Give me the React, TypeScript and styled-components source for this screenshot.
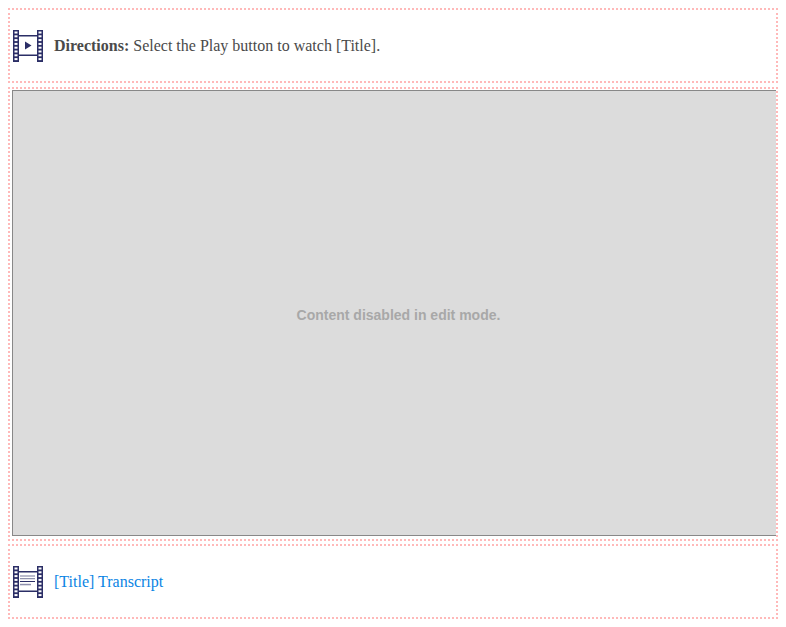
import React, { FC } from 'react';
import styled, { createGlobalStyle } from 'styled-components';

const GlobalStyle = createGlobalStyle`
    body {
        margin: 8px;
        background: #fff;
    }
`;

const HOLES = [0, 1, 2, 3, 4, 5, 6, 7];

const FilmStrips: FC = () => (
    <>
        <rect x="0" y="0" width="6" height="32" fill="#2b2e66" />
        <rect x="24" y="0" width="6" height="32" fill="#2b2e66" />
        {HOLES.map(i => (
            <g key={i} fill="#fff">
                <rect x="1.5" y={1.5 + i * 3.8} width="3" height="2" />
                <rect x="25.5" y={1.5 + i * 3.8} width="3" height="2" />
            </g>
        ))}
        <rect x="6" y="5" width="18" height="1.5" fill="#2b2e66" />
        <rect x="6" y="24.5" width="18" height="1.5" fill="#2b2e66" />
    </>
);

const PlayIcon: FC = () => (
    <svg width="30" height="32" viewBox="0 0 30 32">
        <FilmStrips />
        <path d="M12 11.5 L18.5 15.5 L12 19.5 Z" fill="#2b2e66" />
    </svg>
);

const TranscriptIcon: FC = () => (
    <svg width="30" height="32" viewBox="0 0 30 32">
        <FilmStrips />
        <rect x="7" y="9.5" width="15" height="1" fill="#77799b" />
        <rect x="7" y="12.2" width="15" height="1" fill="#77799b" />
        <rect x="7" y="15" width="15" height="1" fill="#2b2e66" />
        <rect x="7" y="17.8" width="11" height="1.5" fill="#8f90ad" />
    </svg>
);

const Page = styled.div`
    display: flex;
    flex-direction: column;
    width: 770px;
`;

const Row = styled.div<{ $gap: number }>`
    display: flex;
    align-items: center;
    gap: 11px;
    height: 75px;
    box-sizing: border-box;
    margin-bottom: ${p => p.$gap}px;
    padding: 0 3px;
    border: 2px dotted #ffb9b9;
    font: 16px/22px 'Liberation Serif', serif;
    color: #4a4a4a;
`;

const Directions = styled.p`
    margin: 0;
    strong {
        font-weight: bold;
    }
`;

const TranscriptLink = styled.a`
    color: #0a84e4;
    text-decoration: none;
`;

const MediaFrame = styled.div`
    height: 454px;
    box-sizing: border-box;
    margin-bottom: 3px;
    padding: 1px 0 0 2px;
    border: 2px dotted #ffb9b9;
    overflow: hidden;
`;

const DisabledContent = styled.div`
    display: flex;
    align-items: center;
    justify-content: center;
    width: 772px;
    height: 446px;
    box-sizing: border-box;
    padding-right: 0;
    padding-top: 3px;
    background: #dcdcdc;
    border: 1px solid #888;
    border-right: 0;
    font: bold 14px 'Liberation Sans', sans-serif;
    color: #a8a8a8;
`;

const App: FC = () => (
    <Page>
        <GlobalStyle />
        <Row $gap={4}>
            <PlayIcon />
            <Directions>
                <strong>Directions:</strong> Select the Play button to watch [Title].
            </Directions>
        </Row>
        <MediaFrame>
            <DisabledContent>Content disabled in edit mode.</DisabledContent>
        </MediaFrame>
        <Row $gap={0}>
            <TranscriptIcon />
            <TranscriptLink href="#">[Title] Transcript</TranscriptLink>
        </Row>
    </Page>
);

export default App;
